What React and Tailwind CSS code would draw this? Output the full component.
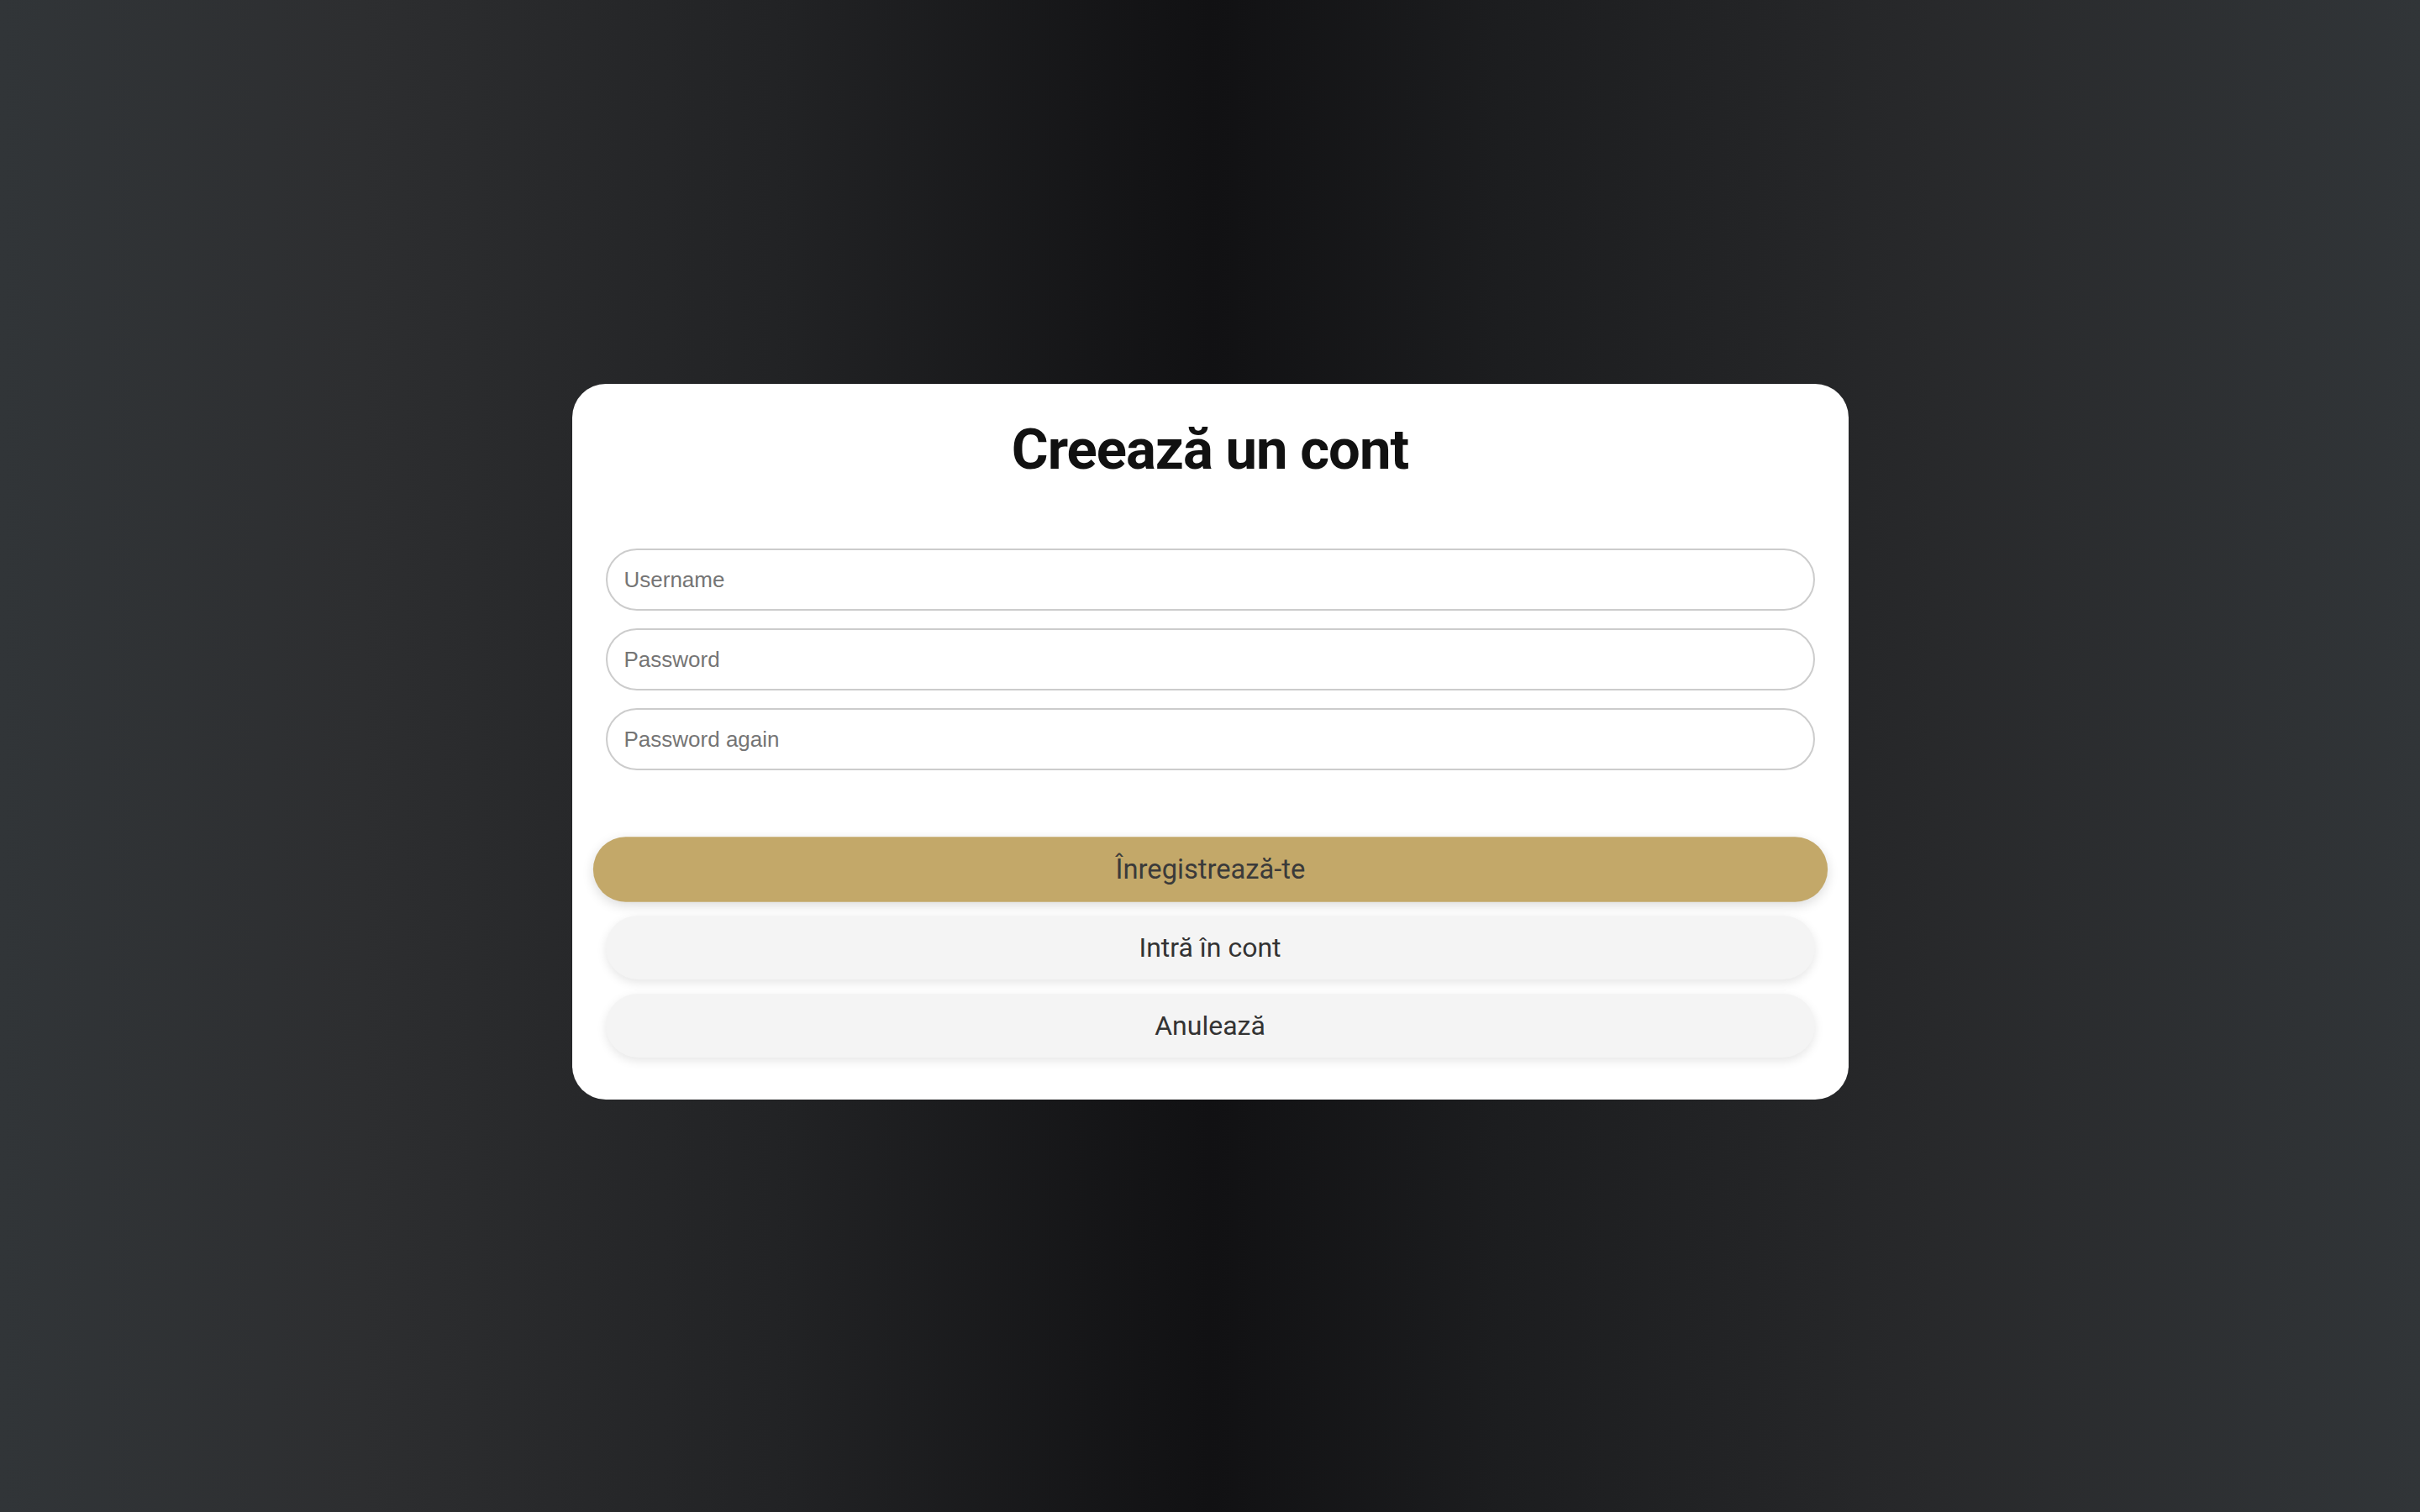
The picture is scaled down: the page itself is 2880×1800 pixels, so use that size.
import React from "react";

function Field({ placeholder, type = "text" }) {
  return (
    <input
      type={type}
      placeholder={placeholder}
      className="h-[74px] w-full rounded-full border-2 border-[#cccccc] bg-white px-[20px] text-[26px] text-[#333] placeholder:text-[#757575] outline-none font-['Liberation_Sans',Arial,sans-serif]"
    />
  );
}

export default function App() {
  return (
    <div className="min-h-screen w-full flex items-center justify-center pb-[34px] bg-[linear-gradient(to_right,#313538_0%,#2d2e30_15%,#222325_32%,#111113_50%,#1c1d1f_62%,#28292b_80%,#313538_100%)]">
      <div className="w-[1519px] rounded-[40px] bg-white px-[40px] pt-[36px] pb-[50px] font-['Roboto',sans-serif]">
        <h1 className="text-center text-[67px] font-bold tracking-[-1px] text-[#111111] leading-[84px] mb-[76px]">
          Creează un cont
        </h1>

        <div className="flex flex-col gap-[21px]">
          <Field placeholder="Username" />
          <Field placeholder="Password" type="password" />
          <Field placeholder="Password again" type="password" />
        </div>

        <div className="flex flex-col gap-[17px] mt-[80px]">
          <button className="h-[76px] w-full rounded-full bg-[#c3a869] text-[32px] text-[#3a3a3a] scale-[1.021] shadow-[0_4px_14px_rgba(0,0,0,0.14)]">
            Înregistrează-te
          </button>
          <button className="h-[76px] w-full rounded-full bg-[#f4f4f4] text-[32px] text-[#333333] shadow-[0_4px_12px_rgba(0,0,0,0.1)]">
            Intră în cont
          </button>
          <button className="h-[76px] w-full rounded-full bg-[#f4f4f4] text-[32px] text-[#333333] shadow-[0_4px_12px_rgba(0,0,0,0.1)]">
            Anulează
          </button>
        </div>
      </div>
    </div>
  );
}
